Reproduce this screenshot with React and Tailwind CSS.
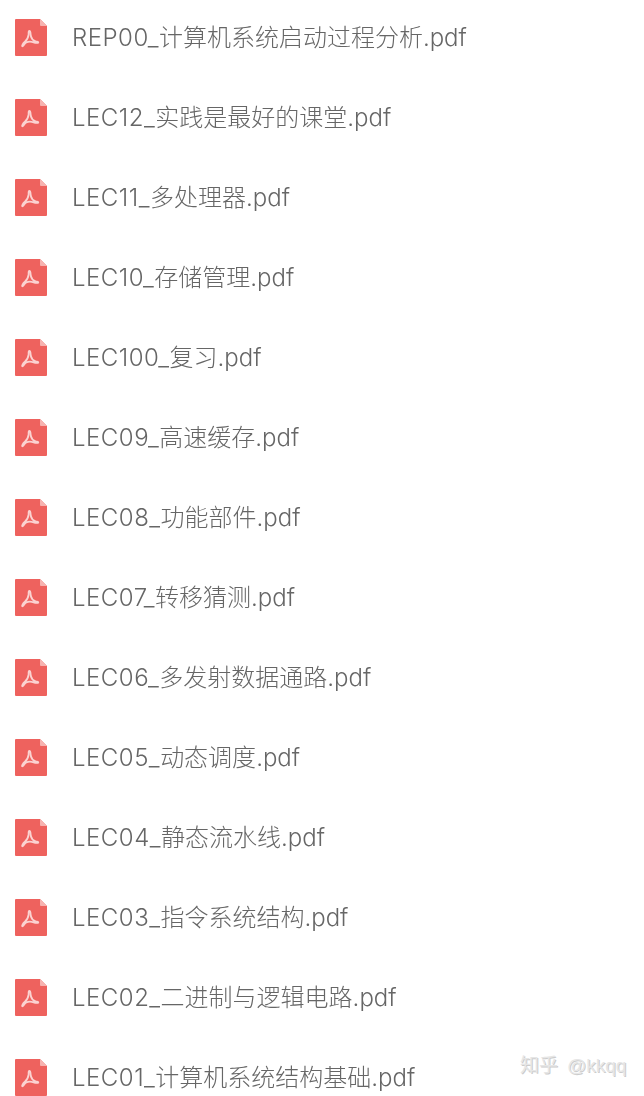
const files = [
  ['REP00_', '计算机系统启动过程分析'],
  ['LEC12_', '实践是最好的课堂'],
  ['LEC11_', '多处理器'],
  ['LEC10_', '存储管理'],
  ['LEC100_', '复习'],
  ['LEC09_', '高速缓存'],
  ['LEC08_', '功能部件'],
  ['LEC07_', '转移猜测'],
  ['LEC06_', '多发射数据通路'],
  ['LEC05_', '动态调度'],
  ['LEC04_', '静态流水线'],
  ['LEC03_', '指令系统结构'],
  ['LEC02_', '二进制与逻辑电路'],
  ['LEC01_', '计算机系统结构基础'],
];

const PdfIcon = () => (
  <svg width="32" height="37" viewBox="0 0 32 37" className="shrink-0">
    <path d="M0 1a1 1 0 0 1 1-1h24l7 7v29a1 1 0 0 1-1 1H1a1 1 0 0 1-1-1z" fill="#ee625e" />
    <path d="M25 0l7 7h-6a1 1 0 0 1-1-1z" fill="#f7b3b0" />
    <path
      d="M14.500 12c1.200 0 1 2.800 1.300 5 .6 2.500 2.600 4.600 4.700 5.400 1.300.5 2.800.2 2.800 1 0 1-2.900.5-4.600-.1-2.600-.9-5.400-.9-7.500.2-2 1.100-3 4.300-3.900 3.800-.8-.5.8-3.100 2.600-4.500 2.100-1.700 3.400-4.700 3.700-7.100.1-1.600-.3-3.700.9-3.700z"
      fill="none"
      stroke="#fbd3d1"
      strokeWidth="1.800"
      strokeLinejoin="round"
    />
  </svg>
);

export default function App() {
  return (
    <div className="relative h-[1096px] w-[644px] overflow-hidden bg-white pt-[19px] pl-[15px] font-['Inter','Noto_Sans_CJK_SC',sans-serif]">
      <div className="flex flex-col gap-[43px] blur-[0.4px]">
        {files.map(([code, title]) => (
          <div key={code} className="flex items-center gap-[25px]">
            <PdfIcon />
            <p className="text-[24px] leading-[37px] font-light whitespace-nowrap text-[#666666]">
              <span className="tracking-[0.5px]">{code}</span>
              {title}.pdf
            </p>
          </div>
        ))}
      </div>
      <div className="absolute top-[1054px] left-[520px] flex gap-[9px] font-['Liberation_Sans','Noto_Sans_CJK_SC',sans-serif] text-[19px] leading-[24px] whitespace-nowrap text-[#e6e6e6] [text-shadow:1px_1px_0_#cccccc]">
        <span>知乎</span>
        <span>@kkqq</span>
      </div>
    </div>
  );
}
